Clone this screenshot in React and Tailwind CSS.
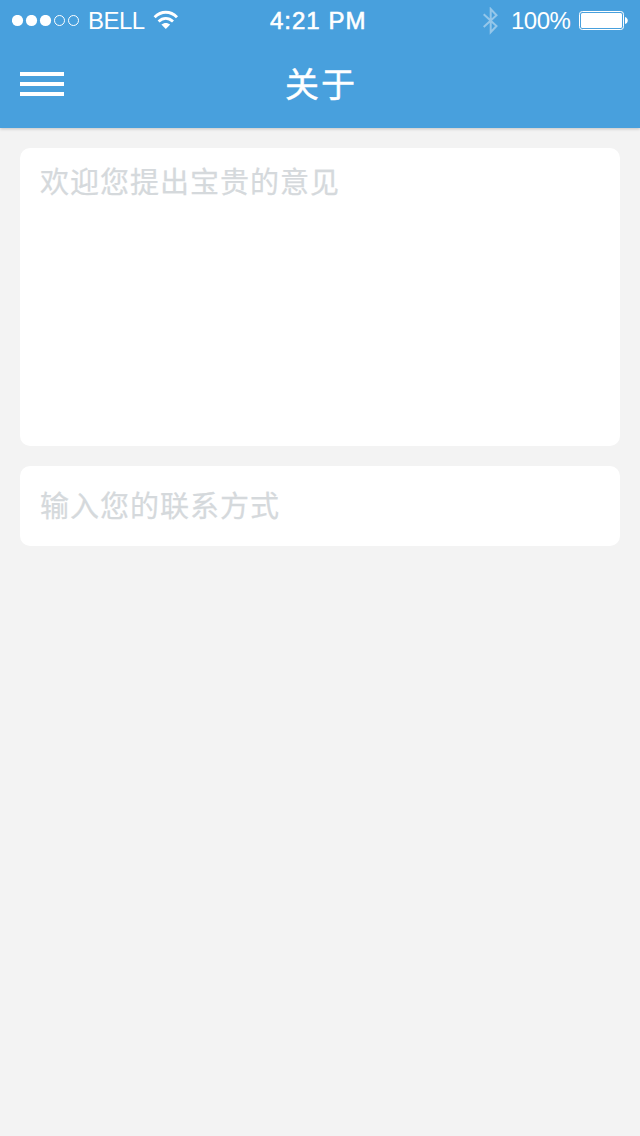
import React from "react";

function SignalDots() {
  return (
    <svg width="68" height="12" viewBox="0 0 68 12" className="ml-[12px] mt-[15px] block shrink-0">
      <circle cx="5.5" cy="5.5" r="5.6" fill="#fff" />
      <circle cx="19.5" cy="5.5" r="5.6" fill="#fff" />
      <circle cx="33.5" cy="5.5" r="5.6" fill="#fff" />
      <circle cx="47.5" cy="5.5" r="5" fill="none" stroke="#fff" />
      <circle cx="61.5" cy="5.5" r="5" fill="none" stroke="#fff" />
    </svg>
  );
}

function Wifi() {
  return (
    <svg width="26" height="20" viewBox="0 0 26 20" className="mt-[10px] block shrink-0">
      <g fill="none" stroke="#fff" strokeWidth="2.9">
        <path d="M1.6 7.2C8.2 0.6 17.4 0.6 24 7.2" />
        <path d="M5.6 11.5C10 7.5 15.6 7.5 20 11.5" />
      </g>
      <path d="M8.4 14.6C11 12.3 14.6 12.3 17.2 14.6L12.8 19Z" fill="#fff" />
    </svg>
  );
}

function Bluetooth() {
  return (
    <svg width="16" height="28" viewBox="0 0 16 28" className="mt-[7px] block shrink-0">
      <path
        d="M1.7 7.2L14.5 19L8.7 25.2V2L14.5 8.2L1.7 20"
        fill="none"
        stroke="#95c7ea"
        strokeWidth="2"
      />
    </svg>
  );
}

function Battery() {
  return (
    <svg width="50" height="20" viewBox="0 0 50 20" className="mt-[11px] block shrink-0">
      <rect x="0.5" y="0.5" width="44" height="18" rx="2.8" fill="none" stroke="#fff" />
      <rect x="2" y="2" width="41" height="15" rx="1.5" fill="#fff" />
      <path d="M46 6C49.7 7 49.7 12 46 13Z" fill="#fff" />
    </svg>
  );
}

function StatusBar() {
  return (
    <div className="flex h-10 items-start whitespace-nowrap font-['Liberation_Sans',Arial,sans-serif] text-white">
      <div className="flex w-[270px] shrink-0">
        <SignalDots />
        <span className="ml-[8px] mt-[7px] w-[65px] text-[24px] leading-[28px] tracking-[-0.5px]">BELL</span>
        <Wifi />
      </div>
      <span className="mt-[7px] w-[212px] shrink-0 text-[24px] leading-[28px] tracking-[1px] [-webkit-text-stroke:0.6px_#fff]">
        4:21 PM
      </span>
      <Bluetooth />
      <span className="ml-[13px] mt-[7px] w-[68px] shrink-0 text-[24px] leading-[28px] tracking-[-0.5px]">100%</span>
      <Battery />
    </div>
  );
}

function Header() {
  return (
    <div className="grid h-[88px] grid-cols-3 items-center px-5">
      <button type="button" aria-label="菜单" className="flex w-11 flex-col gap-1.5">
        <span className="h-1 bg-white" />
        <span className="h-1 bg-white" />
        <span className="h-1 bg-white" />
      </button>
      <h1 className="pb-[3px] pl-0.5 text-center text-[34px] font-normal leading-[48px] tracking-[2px] text-white [-webkit-text-stroke:0.5px_#fff]">
        关于
      </h1>
    </div>
  );
}

export default function App() {
  return (
    <div className="min-h-[1136px] w-[640px] bg-[#f3f3f3] font-['Noto_Sans_CJK_SC',sans-serif]">
      <header className="h-32 bg-[#48a0dd] shadow-[0_1px_3px_rgba(0,0,0,0.2)]">
        <StatusBar />
        <Header />
      </header>
      <main className="flex flex-col gap-5 p-5 text-[29px] leading-[40px] tracking-[1px] text-[#d5d9dc] [-webkit-text-stroke:0.25px_#d5d9dc]">
        <div className="h-[298px] rounded-[10px] bg-white px-5 pt-3">欢迎您提出宝贵的意见</div>
        <div className="flex h-20 items-center rounded-[10px] bg-white px-5 pb-1">输入您的联系方式</div>
      </main>
    </div>
  );
}
